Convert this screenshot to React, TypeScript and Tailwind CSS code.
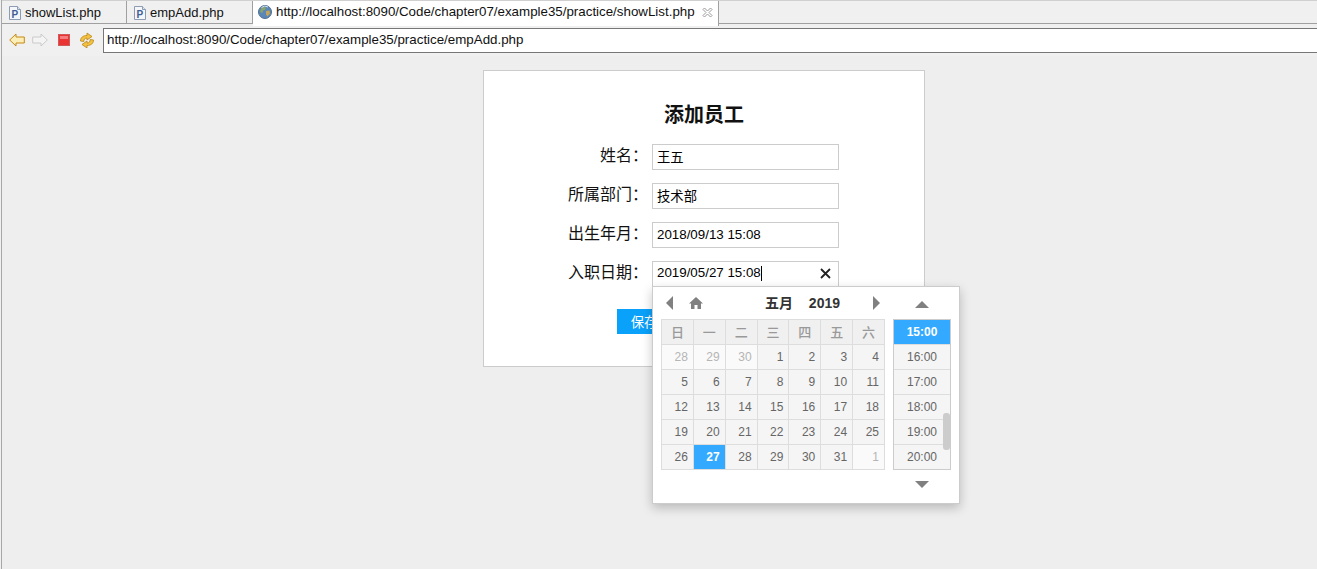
import React from "react";

const sans = "font-['Liberation_Sans','Noto_Sans_CJK_SC',sans-serif]";

function PhpIcon() {
  return (
    <svg width="16" height="16" viewBox="0 0 16 16" className="shrink-0">
      <path d="M2.500 1.500h8l3 3v10h-11z" fill="#f4f6fa" stroke="#8d9bb3" />
      <path d="M10.500 1.500v3h3" fill="#dfe5ef" stroke="#8d9bb3" />
      <text x="4.500" y="12.500" fontSize="10" fontWeight="700" fontFamily="Liberation Sans" fill="#3f5f95">P</text>
    </svg>
  );
}

function GlobeIcon() {
  return (
    <svg width="16" height="16" viewBox="0 0 16 16" className="shrink-0">
      <circle cx="8" cy="8" r="6.500" fill="#5a86b8" stroke="#51708f" />
      <path d="M4 4.500c2-2 4-1.500 5-1l-1 2.500-2 .5-.5 2.500L3 8z" fill="#8aa56a" />
      <path d="M9 7l3.500-.5.5 3-2.500 3-1.500-2z" fill="#c4a35a" />
      <path d="M4.500 3.500A5.500 5.500 0 0 1 11 3" stroke="#d7e6f5" fill="none" />
    </svg>
  );
}

function Tab({ label, width }: { label: string; width: string }) {
  return (
    <div className={`flex h-[22px] items-center gap-[2px] border-r border-[#a0a0a0] bg-[#f0f0f0] pl-[5px] pt-px text-[13px] text-[#111] ${width}`}>
      <PhpIcon />
      <span>{label}</span>
    </div>
  );
}

function ToolbarIcons() {
  return (
    <div className="flex w-[101px] shrink-0 items-center pl-[7px]">
      <svg width="16" height="14" viewBox="0 0 16 14">
        <path d="M.7 7 7 1v3h8.300v6H7v3z" fill="#fbeeb8" stroke="#c58a12" />
      </svg>
      <svg width="16" height="14" viewBox="0 0 16 14" className="ml-[7px]">
        <path d="M15.300 7 9 1v3H.7v6H9v3z" fill="#f4f4f4" stroke="#cacaca" />
      </svg>
      <svg width="12" height="12" viewBox="0 0 12 12" className="ml-[10px]">
        <rect x=".5" y=".5" width="11" height="11" fill="#ea3434" stroke="#cf5a5a" />
        <rect x="2" y="2" width="8" height="3" fill="#f67d7d" />
      </svg>
      <svg width="16" height="16" viewBox="0 0 16 16" className="ml-[9px]">
        <path d="M1.500 9C1.500 5.500 4 3.500 8 3.500V1l5 3.500L8 8V6C6 6 4.800 7.200 4.800 9.500z" fill="#f4c23f" stroke="#b9851a" strokeWidth=".8" />
        <path d="M1.500 9C1.500 5.500 4 3.500 8 3.500V1l5 3.500L8 8V6C6 6 4.800 7.200 4.800 9.500z" fill="#f4c23f" stroke="#b9851a" strokeWidth=".8" transform="rotate(180 8 8.500)" />
      </svg>
    </div>
  );
}

function Label({ text }: { text: string }) {
  return <div className="w-[164px] pb-[5px] text-right text-[16px] leading-[21px] text-[#111]">{text}</div>;
}

function Field({ label, value }: { label: string; value: string }) {
  return (
    <div className="flex h-[26px] items-center">
      <Label text={label} />
      <input
        readOnly
        value={value}
        className={`ml-[4px] h-[26px] w-[187px] border border-[#cccccc] px-[4px] pb-[2px] text-[13.33px] text-black outline-none ${sans}`}
      />
    </div>
  );
}

function Triangle({ dir }: { dir: "left" | "right" | "up" | "down" }) {
  const p = {
    left: "M8 0v14L1 7z",
    right: "M1 0v14l7-7z",
    up: "M0 8 7 1l7 7z",
    down: "M0 1h14L7 8z",
  }[dir];
  const w = dir === "left" || dir === "right" ? 9 : 14;
  const h = dir === "left" || dir === "right" ? 14 : 9;
  return (
    <svg width={w} height={h} viewBox={`0 0 ${w} ${h}`}>
      <path d={p} fill="#808080" />
    </svg>
  );
}

const heads = ["日", "一", "二", "三", "四", "五", "六"];
const days: { d: number; other?: boolean; sel?: boolean }[] = [
  { d: 28, other: true },
  { d: 29, other: true },
  { d: 30, other: true },
  ...Array.from({ length: 31 }, (_, i) => ({ d: i + 1, sel: i + 1 === 27 })),
  { d: 1, other: true },
];

function DayCell({ d, other, sel }: { d: number; other?: boolean; sel?: boolean }) {
  const tone = sel
    ? "bg-[#33aaff] font-bold text-white"
    : other
      ? "bg-[#fafafa] text-[#b5b5b5]"
      : "bg-[#f5f5f5] text-[#666666]";
  return (
    <div className={`h-[25px] border-r border-b border-[#dddddd] pr-[5px] text-right text-[12px] leading-[24px] ${tone}`}>
      {d}
    </div>
  );
}

function Picker() {
  return (
    <div className={`absolute left-[168px] top-[215px] h-[218px] w-[308px] border border-[#cccccc] bg-white shadow-[0_4px_10px_rgba(0,0,0,0.22)] ${sans}`}>
      <div className="flex">
        <div className="ml-[8px] w-[224px]">
          <div className="flex h-[32px] items-center">
            <span className="ml-[4px] flex"><Triangle dir="left" /></span>
            <svg width="14" height="12" viewBox="0 0 14 12" className="ml-[15px]">
              <path d="M7 0 14 6.500H12V12H8.500V8h-3v4H2V6.500H0z" fill="#808080" />
            </svg>
            <div className="ml-[62px] flex w-[75px] justify-between text-[14px] font-bold text-[#333333]">
              <span>五月</span>
              <span>2019</span>
            </div>
            <span className="ml-[32px] flex"><Triangle dir="right" /></span>
          </div>
          <div className="grid grid-cols-7 border-t border-l border-[#dddddd]">
            {heads.map((h) => (
              <div key={h} className="h-[25px] border-r border-b border-[#dddddd] bg-[#f0f0f0] pt-px text-center text-[13px] font-medium leading-[24px] text-[#999999]">
                {h}
              </div>
            ))}
            {days.map((c, i) => (
              <DayCell key={i} {...c} />
            ))}
          </div>
        </div>
        <div className="ml-[8px] w-[58px]">
          <div className="flex h-[32px] items-center justify-center pt-[3px]">
            <Triangle dir="up" />
          </div>
          <div className="relative border border-[#cccccc]">
            <div className="h-[24px] bg-[#33aaff] text-center text-[12px] font-bold leading-[24px] text-white">15:00</div>
            {["16:00", "17:00", "18:00", "19:00", "20:00"].map((t) => (
              <div key={t} className="h-[25px] border-t border-[#dddddd] bg-[#f5f5f5] text-center text-[12px] leading-[24px] text-[#666666]">
                {t}
              </div>
            ))}
            <div className="absolute right-0 top-[93px] h-[37px] w-[7px] rounded-[3px] bg-[#cccccc]" />
          </div>
          <div className="flex h-[28px] items-center justify-center">
            <Triangle dir="down" />
          </div>
        </div>
      </div>
    </div>
  );
}

export default function App() {
  return (
    <div className="h-[569px] w-[1317px] overflow-hidden bg-[#f0f0f0] pl-px">
      <div className={`h-full border-l border-[#a8a8a8] bg-[#eeeeee] ${sans}`}>
        <div className="flex h-[24px] border-t border-b border-t-[#d0d0d0] border-b-[#a0a0a0] bg-[#f0f0f0]">
          <Tab label="showList.php" width="w-[125px]" />
          <Tab label="empAdd.php" width="w-[126px]" />
          <div className="relative z-10 flex h-[25px] w-[466px] items-center border-r border-[#a0a0a0] bg-white pb-[3px] pl-[4px] text-[13.33px] text-[#111]">
            <GlobeIcon />
            <span className="ml-[3px]">http://localhost:8090/Code/chapter07/example35/practice/showList.php</span>
            <svg width="11" height="11" viewBox="0 0 11 11" className="ml-[7px]">
              <path d="M1 2.500 2.500 1l3 3 3-3L10 2.500l-3 3 3 3L8.500 10l-3-3-3 3L1 8.500l3-3z" fill="#fff" stroke="#9a9a9a" />
            </svg>
          </div>
        </div>
        <div className="flex h-[32px] items-center bg-[#f0f0f0]">
          <ToolbarIcons />
          <div className="flex h-[25px] w-[1300px] shrink-0 items-center border border-[#777777] bg-white pl-[3px] text-[13.33px] text-[#111]">
            http://localhost:8090/Code/chapter07/example35/practice/empAdd.php
          </div>
        </div>
        <div className="relative ml-[481px] mt-[14px] h-[297px] w-[442px] border border-[#cccccc] bg-white font-['Noto_Sans_CJK_SC',sans-serif]">
          <div className="pt-[30px] text-center text-[20px] font-bold leading-[26px] text-[#111]">添加员工</div>
          <div className="mt-[17px] flex flex-col gap-[13px]">
            <Field label="姓名：" value="王五" />
            <Field label="所属部门：" value="技术部" />
            <Field label="出生年月：" value="2018/09/13 15:08" />
            <div className="flex h-[26px] items-center">
              <Label text="入职日期：" />
              <div className={`ml-[4px] flex h-[26px] w-[187px] items-center border border-[#cccccc] px-[4px] pb-[2px] text-[13.33px] text-black ${sans}`}>
                <span>2019/05/27 15:08</span>
                <span className="h-[15px] w-px bg-black" />
                <svg width="11" height="11" viewBox="0 0 11 11" className="ml-auto mr-[3px]">
                  <path d="M1 1l9 9M10 1l-9 9" stroke="#222" strokeWidth="1.800" />
                </svg>
              </div>
            </div>
          </div>
          <button className="ml-[133px] mt-[22px] h-[25px] w-[54px] bg-[#0aa1fb] text-center text-[13.33px] text-white">
            保存
          </button>
          <Picker />
        </div>
      </div>
    </div>
  );
}
